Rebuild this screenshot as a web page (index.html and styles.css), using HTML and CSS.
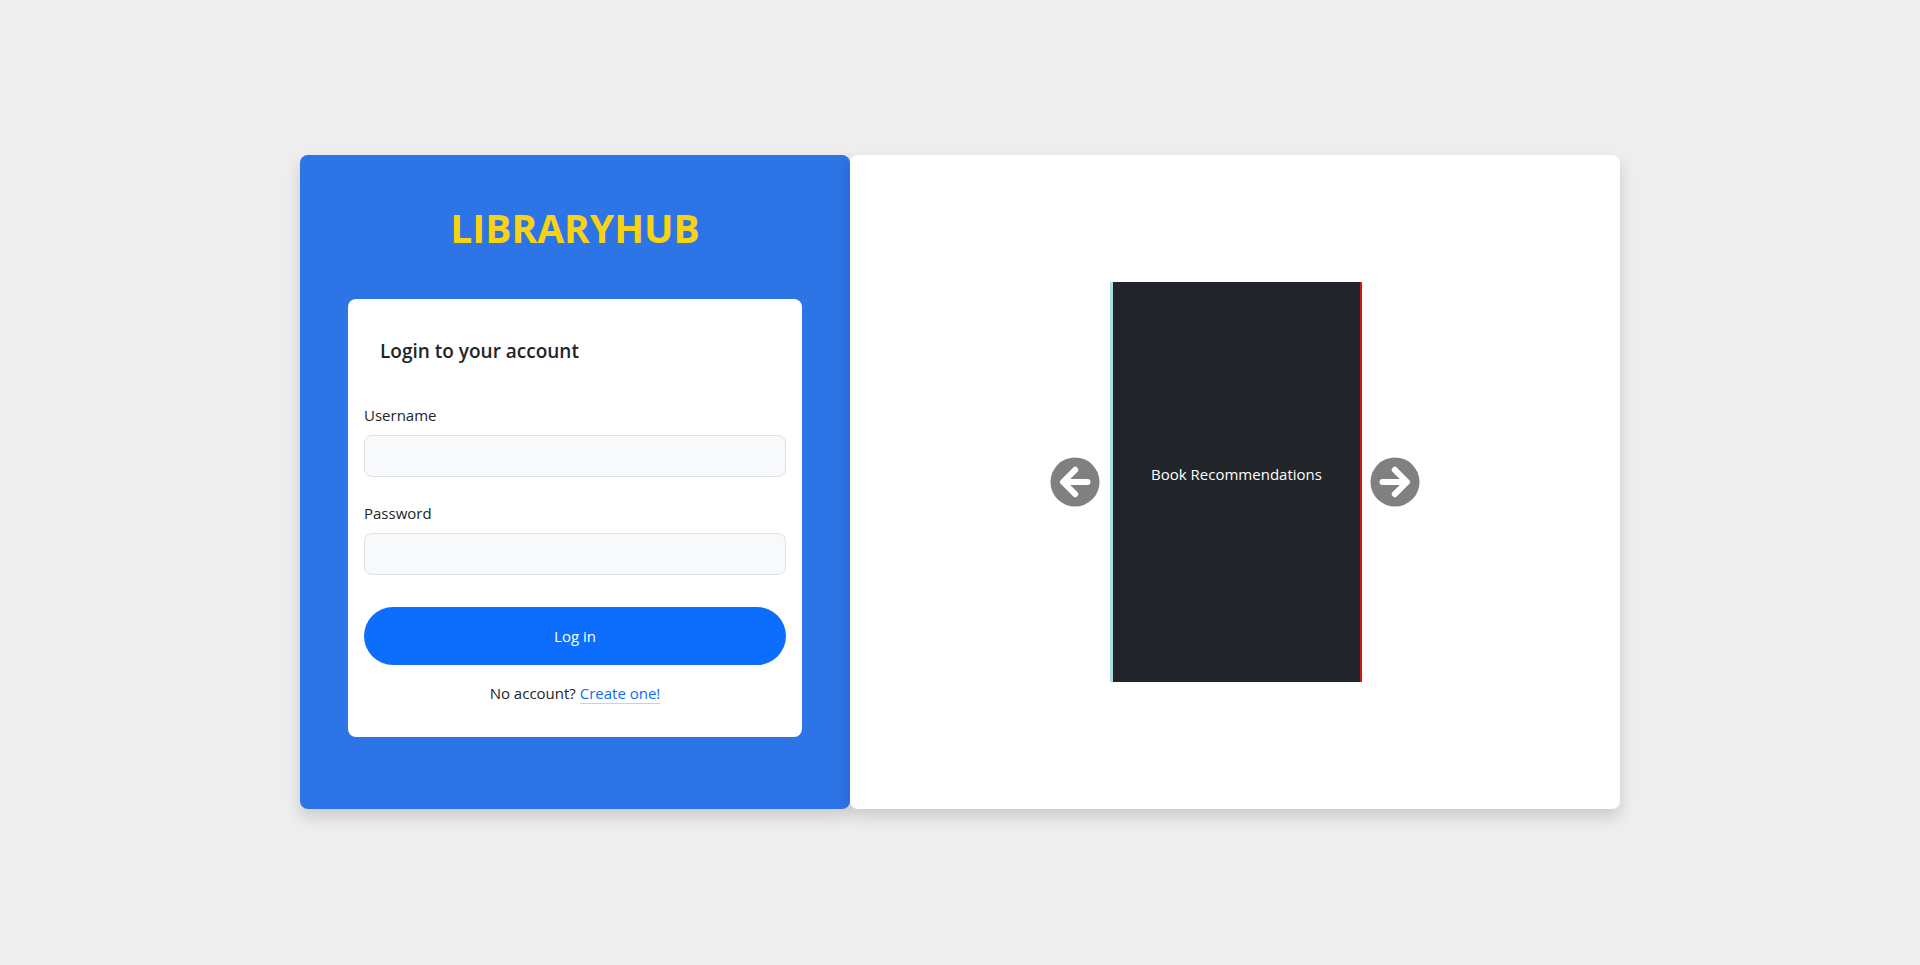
FILE: index.html
```html
<!DOCTYPE html>
<html lang="en">
<head>
<meta charset="utf-8">
<meta name="viewport" content="width=device-width, initial-scale=1">
<title>LibraryHub</title>
<link rel="stylesheet" href="styles.css">
</head>
<body>
<main class="layout">
  <section class="panel login-panel">
    <h1 class="brand">LIBRARYHUB</h1>
    <form class="card">
      <h2 class="card-title">Login to your account</h2>
      <div class="field">
        <label for="username">Username</label>
        <input id="username" type="text">
      </div>
      <div class="field">
        <label for="password">Password</label>
        <input id="password" type="password">
      </div>
      <button class="submit" type="submit">Log in</button>
      <p class="signup">No account? <a href="#">Create one!</a></p>
    </form>
  </section>
  <section class="panel showcase">
    <button class="arrow" type="button" aria-label="Previous book">
      <svg viewBox="0 0 50 50"><circle cx="25" cy="25" r="24.5" fill="#808080"/><path d="M25.2 12.800 13 25l12.200 12.200M13.500 25H37.500" fill="none" stroke="#fff" stroke-width="6" stroke-linecap="round" stroke-linejoin="round"/></svg>
    </button>
    <div class="book"><span class="book-title">Book Recommendations</span></div>
    <button class="arrow" type="button" aria-label="Next book">
      <svg viewBox="0 0 50 50"><circle cx="25" cy="25" r="24.5" fill="#808080"/><path d="M24.800 12.800 37 25l-12.200 12.200M36.500 25H12.500" fill="none" stroke="#fff" stroke-width="6" stroke-linecap="round" stroke-linejoin="round"/></svg>
    </button>
  </section>
</main>
</body>
</html>
```
FILE: styles.css
```css
*, *::before, *::after { box-sizing: border-box; }

body {
  margin: 0;
  min-height: 100vh;
  padding-bottom: 1px;
  display: flex;
  align-items: center;
  justify-content: center;
  background: #eee;
  color: #212529;
  font-family: "Segoe UI", "Open Sans", "Noto Sans", sans-serif;
  font-size: 15px;
  line-height: 24px;
}

h1, h2, p { margin: 0; }

.layout {
  display: grid;
  grid-template-columns: 5fr 7fr;
  width: 100%;
  max-width: 1320px;
}

.panel {
  border-radius: 8px;
  box-shadow: 0 8px 16px rgba(0, 0, 0, 0.15);
}

.login-panel {
  padding: 48px 48px 72px;
  background: #2d74e7;
}

.brand {
  margin-bottom: 46px;
  color: #f9d312;
  font-size: 39px;
  font-weight: 700;
  line-height: 50px;
  text-align: center;
}

.card {
  display: flex;
  flex-direction: column;
  padding: 16px 16px 32px;
  border-radius: 8px;
  background: #fff;
}

.card-title {
  padding: 24px 16px;
  margin-bottom: 16px;
  font-size: 19px;
  font-weight: 600;
  line-height: 24px;
}

.field {
  display: flex;
  flex-direction: column;
  gap: 8px;
  margin-bottom: 24px;
}

.field input {
  width: 100%;
  height: 42px;
  padding: 8px 12px;
  border: 1px solid #dee2e6;
  border-radius: 8px;
  background: #f8f9fb;
  font: inherit;
}

.submit {
  margin: 8px 0 16px;
  padding: 17px;
  border: 0;
  border-radius: 50px;
  background: #0d6efd;
  color: #fff;
  font: inherit;
}

.signup { text-align: center; }

.signup a {
  color: #0d6efd;
  text-decoration: none;
  border-bottom: 1px solid #b6d4fe;
}

.showcase {
  display: flex;
  align-items: center;
  justify-content: center;
  gap: 10px;
  background: #fff;
}

.arrow {
  width: 50px;
  height: 50px;
  padding: 0;
  border: 0;
  background: none;
}

.arrow svg { display: block; }

.book {
  display: flex;
  align-items: center;
  justify-content: center;
  width: 252px;
  height: 400px;
  margin-right: -2px;
  border-left: 3px solid #a9dfe4;
  border-right: 2px solid #d01c0c;
  background: #212529;
  color: #fff;
}

.book-title { padding-bottom: 16px; }
```
